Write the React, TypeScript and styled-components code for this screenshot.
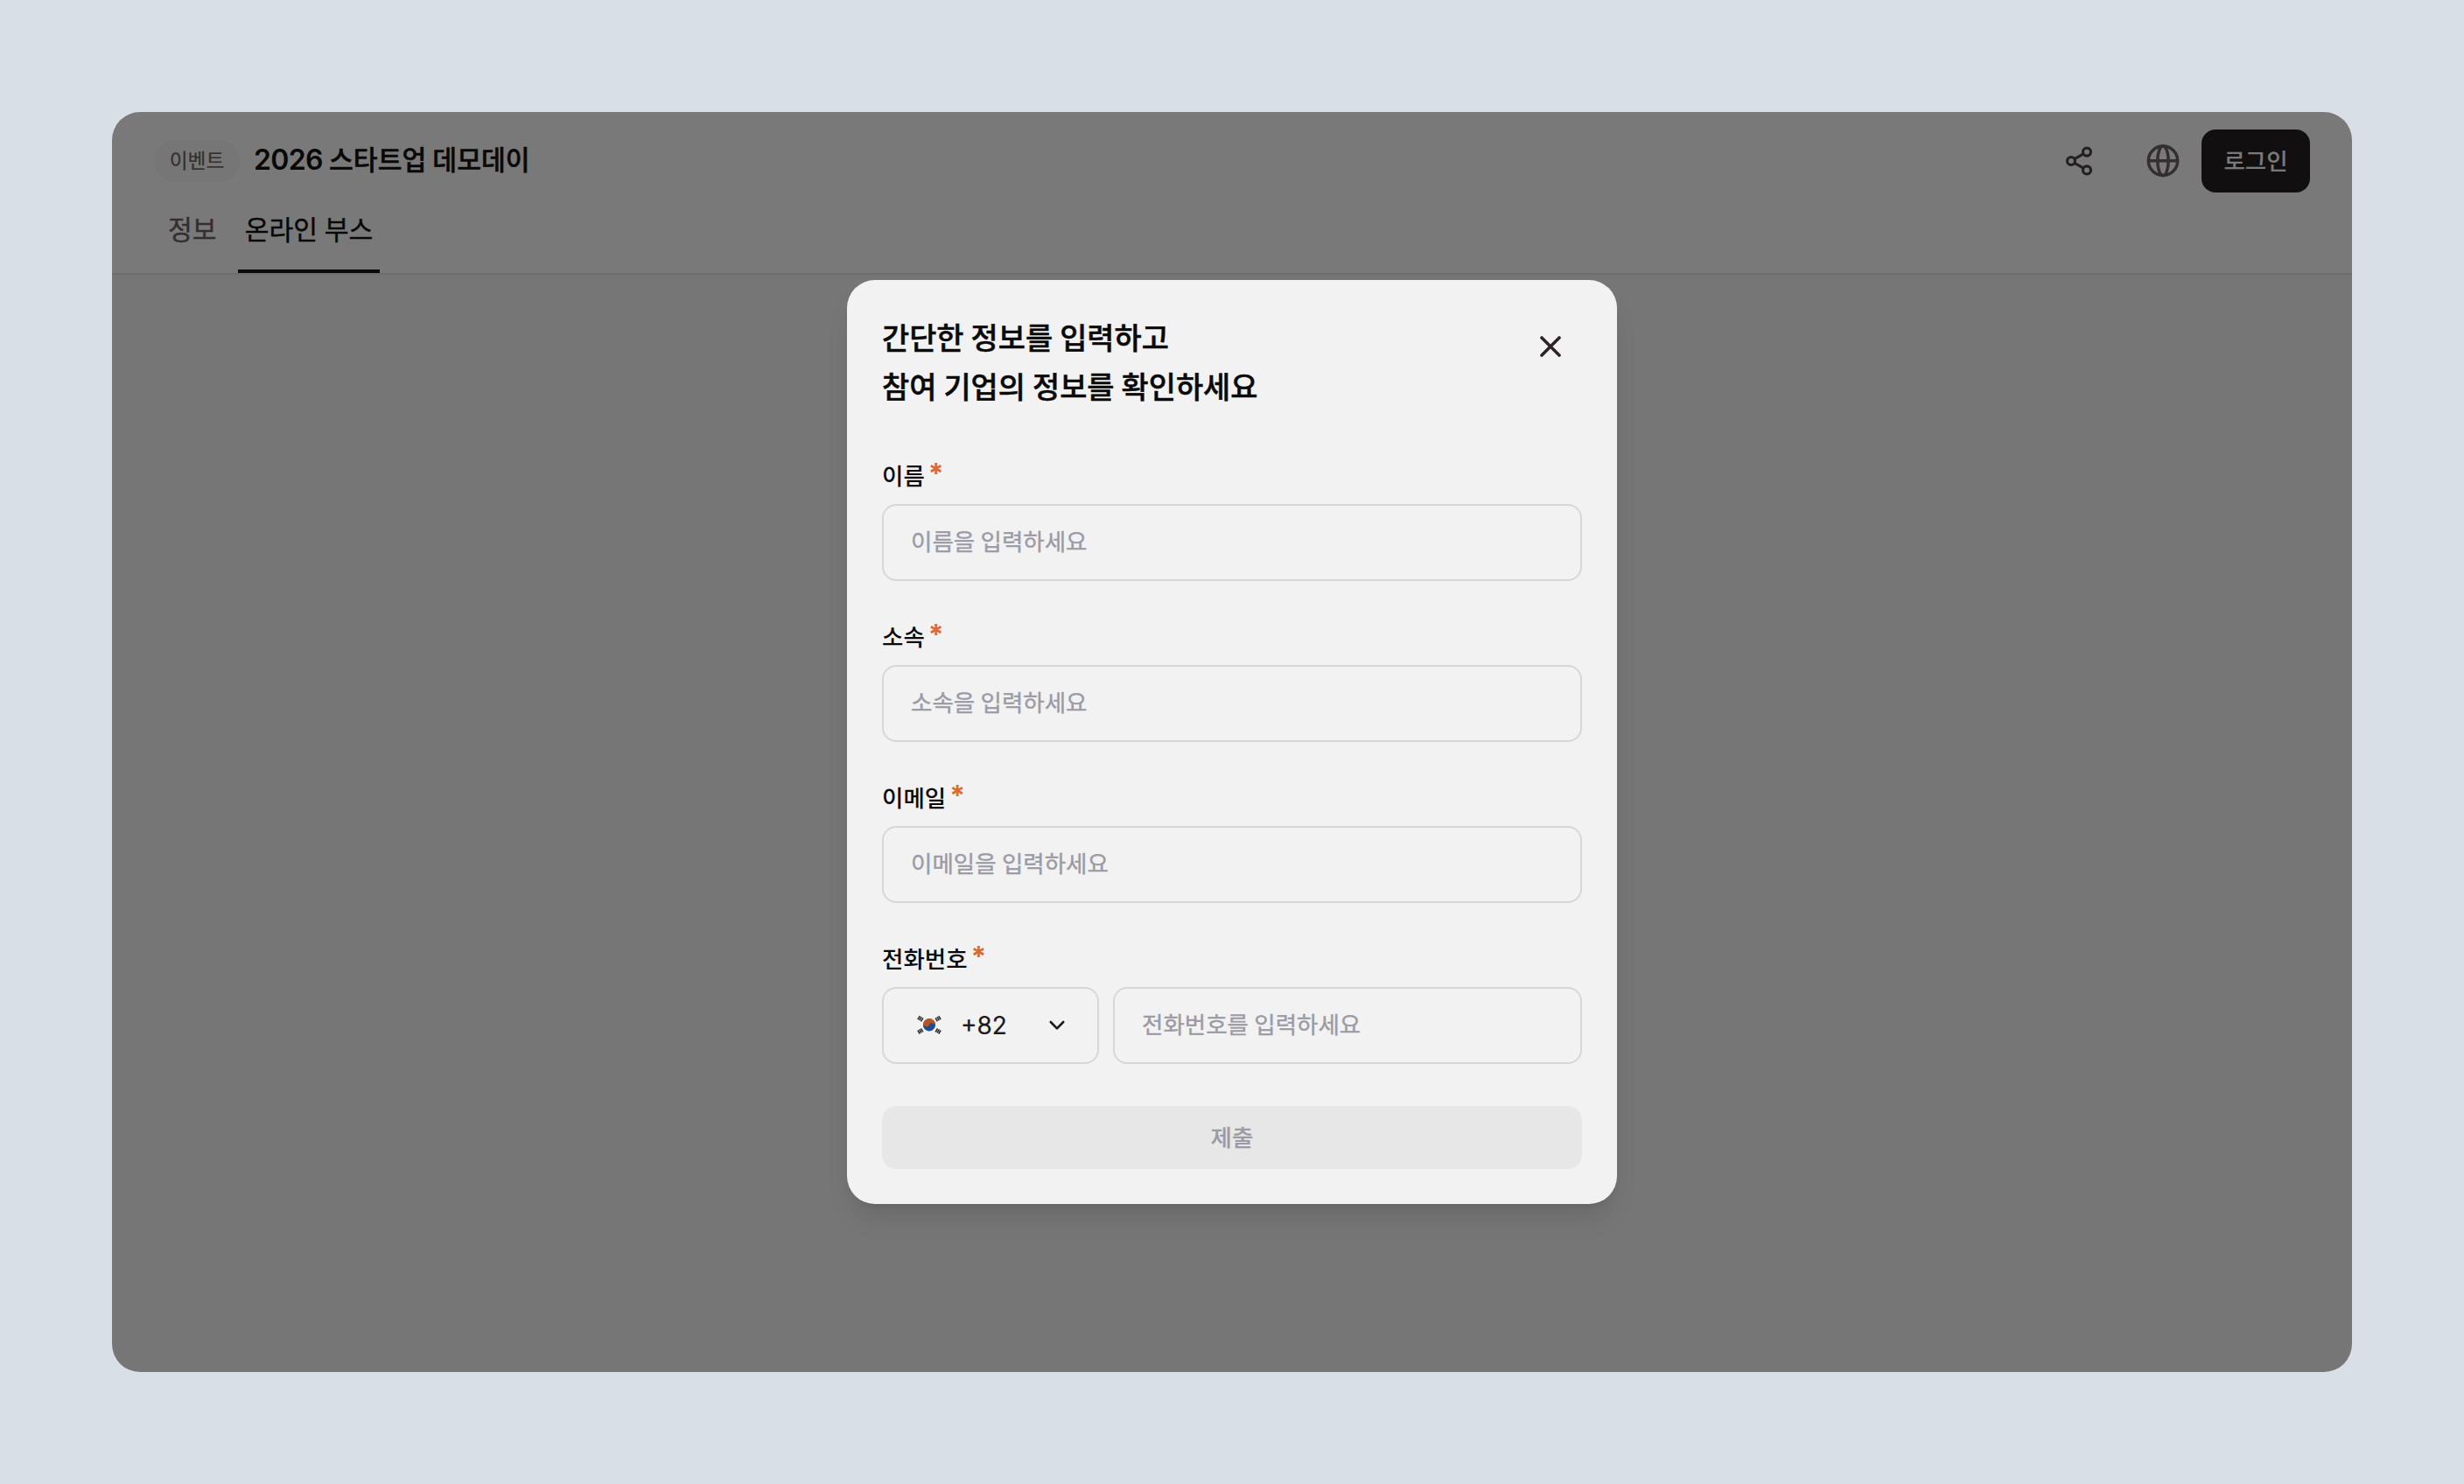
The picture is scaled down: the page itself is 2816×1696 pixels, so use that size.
import React from 'react';
import styled, { createGlobalStyle } from 'styled-components';

const GlobalStyle = createGlobalStyle`
  * {
    box-sizing: border-box;
  }

  body {
    margin: 0;
    background: #d8dfe7;
    font-family: 'Inter', 'Noto Sans CJK KR', sans-serif;
    word-spacing: -1px;
  }

  button,
  input {
    font-family: inherit;
    word-spacing: inherit;
  }
`;

const fields = [
  { id: 'name', label: '이름', placeholder: '이름을 입력하세요' },
  { id: 'company', label: '소속', placeholder: '소속을 입력하세요' },
  { id: 'email', label: '이메일', placeholder: '이메일을 입력하세요' }
];

const ShareIcon: React.FC = () => (
  <svg width="40" height="40" viewBox="0 0 40 40" fill="none" stroke="currentColor" strokeWidth="3.1">
    <circle cx="11" cy="20" r="4.5" />
    <circle cx="29" cy="9.6" r="4.5" />
    <circle cx="29" cy="30.4" r="4.5" />
    <path d="M14.9 17.7 25.1 11.9M14.9 22.3 25.1 28.1" />
  </svg>
);

const GlobeIcon: React.FC = () => (
  <svg width="40" height="40" viewBox="0 0 40 40" fill="none" stroke="currentColor" strokeWidth="3.5">
    <circle cx="20" cy="19.7" r="16.7" />
    <ellipse cx="20" cy="19.7" rx="6.2" ry="16.7" />
    <path d="M3.3 19.7h33.4" />
  </svg>
);

const CloseIcon: React.FC = () => (
  <svg width="28" height="28" viewBox="0 0 28 28" fill="none" stroke="currentColor" strokeWidth="3.6" strokeLinecap="round">
    <path d="M4 4l20 20M24 4L4 24" />
  </svg>
);

const ChevronIcon: React.FC = () => (
  <svg width="20" height="12" viewBox="0 0 20 12" fill="none" stroke="currentColor" strokeWidth="2.6" strokeLinecap="round" strokeLinejoin="round">
    <path d="M2.8 2l7.2 7.4L17.2 2" />
  </svg>
);

const KoreaFlag: React.FC = () => (
  <svg width="28" height="24" viewBox="0 0 28 24" fill="none">
    <g transform="translate(14 11.3) rotate(12)">
      <circle r="7.1" fill="#1b4c94" />
      <path d="M-7.1 0A7.1 7.1 0 0 1 7.1 0A3.55 2.6 0 0 0 0 0A3.55 2.6 0 0 1-7.1 0z" fill="#bb5220" />
    </g>
    <g stroke="#2c2a2b" strokeWidth="1.6">
      <path d="M.9 5.1 3.3 1.1M2.7 6.2 5.1 2.2M4.5 7.3 6.9 3.3" />
      <path d="M27.1 5.1 24.7 1.1M25.3 6.2 22.9 2.2M23.5 7.3 21.1 3.3" />
      <path d="M.9 17.5 3.3 21.5M2.7 16.4 5.1 20.4M4.5 15.3 6.9 19.3" />
      <path d="M27.1 17.5 24.7 21.5M25.3 16.4 22.9 20.4M23.5 15.3 21.1 19.3" />
    </g>
  </svg>
);

const App: React.FC = () => {
  return (
    <Page>
      <GlobalStyle />
      <Window>
        <Header>
          <TopBar>
            <Badge>이벤트</Badge>
            <EventTitle><EventYear>2026</EventYear> 스타트업 데모데이</EventTitle>
            <Actions>
              <IconButton aria-label="공유" $dark><ShareIcon /></IconButton>
              <IconButton aria-label="언어"><GlobeIcon /></IconButton>
              <LoginButton>로그인</LoginButton>
            </Actions>
          </TopBar>
          <Tabs>
            <Tab>정보</Tab>
            <Tab $active>온라인 부스</Tab>
          </Tabs>
        </Header>

        <Overlay>
          <Modal role="dialog">
            <ModalHeader>
              <ModalTitle>
                간단한 정보를 입력하고
                <br />
                참여 기업의 정보를 확인하세요
              </ModalTitle>
              <CloseButton aria-label="닫기"><CloseIcon /></CloseButton>
            </ModalHeader>

            <Form>
              {fields.map(field => (
                <Field key={field.id}>
                  <Label htmlFor={field.id}>{field.label}<Required>*</Required></Label>
                  <Input id={field.id} placeholder={field.placeholder} />
                </Field>
              ))}
              <Field>
                <Label htmlFor="phone">전화번호<Required>*</Required></Label>
                <PhoneRow>
                  <CountrySelect type="button">
                    <KoreaFlag />
                    <DialCode>+82</DialCode>
                    <ChevronIcon />
                  </CountrySelect>
                  <Input id="phone" placeholder="전화번호를 입력하세요" />
                </PhoneRow>
              </Field>
              <SubmitButton disabled>제출</SubmitButton>
            </Form>
          </Modal>
        </Overlay>
      </Window>
    </Page>
  );
};

const Page = styled.div`
  height: 1696px;
  padding: 128px;
`;

const Window = styled.div`
  position: relative;
  height: 1440px;
  border-radius: 32px;
  background: #ececec;
  overflow: hidden;
`;

const Header = styled.header`
  height: 186px;
  background: #f3f3f3;
  border-bottom: 2px solid #d8d8d8;
`;

const TopBar = styled.div`
  height: 112px;
  padding: 0 48px;
  display: flex;
  align-items: center;
`;

const Badge = styled.span`
  height: 48px;
  width: 98px;
  border-radius: 24px;
  background: #eaecea;
  color: #6a5c5e;
  font-size: 22.7px;
  line-height: 47px;
  text-align: center;
  -webkit-text-stroke: 0.2px currentColor;
`;

const EventTitle = styled.h1`
  margin: 0 0 3px 16px;
  color: #101010;
  font-size: 30.25px;
  font-weight: 500;
  line-height: 48px;
  -webkit-text-stroke: 0.5px currentColor;
`;

const EventYear = styled.span`
  font-size: 32px;
  font-weight: 600;
  letter-spacing: -0.02em;
  -webkit-text-stroke: 0;
`;

const Actions = styled.div`
  margin-left: auto;
  display: flex;
  align-items: center;
`;

const IconButton = styled.button<{ $dark?: boolean }>`
  width: 56px;
  height: 56px;
  margin-right: ${props => (props.$dark ? '40px' : '16px')};
  padding: 0;
  display: flex;
  align-items: center;
  justify-content: center;
  border: none;
  background: transparent;
  color: ${props => (props.$dark ? '#4c3e40' : '#6a5c5e')};
`;

const LoginButton = styled.button`
  width: 124px;
  height: 72px;
  padding: 0 0 4px;
  border: none;
  border-radius: 16px;
  background: #231f20;
  color: #f2f2f2;
  font-size: 26.5px;
  font-weight: 500;
`;

const Tabs = styled.nav`
  height: 72px;
  padding: 0 56px;
  display: flex;
`;

const Tab = styled.a<{ $active?: boolean }>`
  height: 72px;
  padding: 0 8px;
  margin-right: 16px;
  border-bottom: 4px solid ${props => (props.$active ? '#141414' : 'transparent')};
  color: ${props => (props.$active ? '#101010' : '#6a5c5e')};
  font-size: 30.25px;
  line-height: 46px;
  -webkit-text-stroke: 0.4px currentColor;
`;

const Overlay = styled.div`
  position: absolute;
  inset: 0;
  display: flex;
  align-items: center;
  justify-content: center;
  background: rgba(0, 0, 0, 0.5);
`;

const Modal = styled.section`
  width: 880px;
  height: 1056px;
  padding: 40px;
  border-radius: 32px;
  background: #f2f2f2;
  box-shadow: 0 20px 30px -6px rgba(0, 0, 0, 0.1), 0 8px 12px -8px rgba(0, 0, 0, 0.1);
`;

const ModalHeader = styled.div`
  height: 112px;
  display: flex;
  justify-content: space-between;
  align-items: flex-start;
`;

const ModalTitle = styled.h2`
  margin: -1px 0 0;
  color: #0a0a0a;
  font-size: 33.9px;
  font-weight: 500;
  line-height: 56px;
  -webkit-text-stroke: 0.5px currentColor;
`;

const CloseButton = styled.button`
  width: 72px;
  height: 72px;
  padding: 0;
  display: flex;
  align-items: center;
  justify-content: center;
  border: none;
  background: transparent;
  color: #2e2425;
`;

const Form = styled.div`
  margin-top: 56px;
  display: flex;
  flex-direction: column;
  gap: 48px;
`;

const Field = styled.div`
  display: flex;
  flex-direction: column;
  gap: 15px;
`;

const Label = styled.label`
  height: 33px;
  display: flex;
  align-items: flex-start;
  gap: 4px;
  color: #0a0a0a;
  font-size: 26.5px;
  font-weight: 500;
  line-height: 32px;
`;

const Required = styled.span`
  color: #db6b35;
  font-size: 32px;
  font-weight: 700;
  line-height: 27px;
`;

const Input = styled.input`
  width: 100%;
  min-width: 0;
  height: 88px;
  padding: 0 31px 2px;
  border: 2px solid #d6d7da;
  border-radius: 16px;
  outline: none;
  background: transparent;
  color: #0a0a0a;
  font-size: 26.5px;

  &::placeholder {
    color: #9b9ba5;
    opacity: 1;
    -webkit-text-stroke: 0.4px currentColor;
  }
`;

const PhoneRow = styled.div`
  display: flex;
  gap: 16px;
`;

const CountrySelect = styled.button`
  flex: none;
  width: 248px;
  height: 88px;
  padding: 0 36px 0 38px;
  display: flex;
  align-items: center;
  border: 2px solid #d6d7da;
  border-radius: 16px;
  background: transparent;
  color: #1c1a1b;
`;

const DialCode = styled.span`
  margin: 0 auto 0 22px;
  font-size: 28px;
  -webkit-text-stroke: 0.2px currentColor;
`;

const SubmitButton = styled.button`
  height: 72px;
  padding: 0 0 4px;
  border: none;
  border-radius: 16px;
  background: #e7e7e7;
  color: #9b9ba5;
  font-size: 26.5px;
  font-weight: 500;
  -webkit-text-stroke: 0.2px currentColor;
`;

export default App;
